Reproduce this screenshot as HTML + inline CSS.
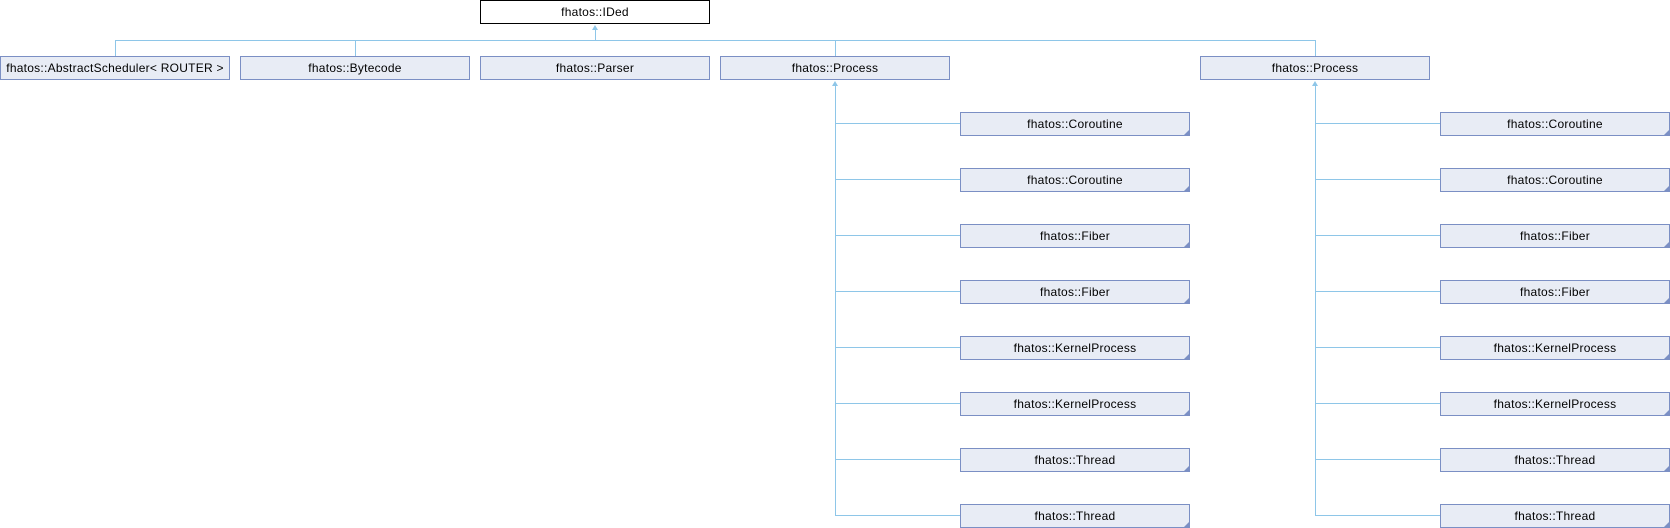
<!DOCTYPE html><html><head><style>
body{margin:0;width:1670px;height:528px;background:#fff;position:relative;overflow:hidden;font-family:"Liberation Sans",sans-serif;font-size:12px}
.b{position:absolute;box-sizing:border-box;height:24px;border:1px solid #7b8fc4;background:#e8ecf5;text-align:center;line-height:22px;color:#000;white-space:nowrap;letter-spacing:0.25px}
.t{border-color:#000;background:#fff}
.c::after{content:"";position:absolute;right:0;bottom:0;border-style:solid;border-width:0 0 5px 5px;border-color:transparent transparent #7b8fc4 transparent}
.h{position:absolute;height:1px;background:#8ec6e8}.v{position:absolute;width:1px;background:#8ec6e8}
.a{position:absolute;width:0;height:0;border-left:3px solid transparent;border-right:3px solid transparent;border-bottom:5px solid #8ec6e8}
</style></head><body>
<div class="b t" style="left:480px;top:0;width:230px">fhatos::IDed</div>
<div class="a" style="left:592px;top:25px"></div>
<div class="v" style="left:595px;top:28px;height:12px"></div>
<div class="h" style="left:115px;top:40px;width:1201px"></div>
<div class="v" style="left:115px;top:40px;height:16px"></div>
<div class="v" style="left:355px;top:40px;height:16px"></div>
<div class="v" style="left:835px;top:40px;height:16px"></div>
<div class="v" style="left:1315px;top:40px;height:16px"></div>
<div class="b" style="left:0;top:56px;width:230px">fhatos::AbstractScheduler&lt; ROUTER &gt;</div>
<div class="b" style="left:240px;top:56px;width:230px">fhatos::Bytecode</div>
<div class="b" style="left:480px;top:56px;width:230px">fhatos::Parser</div>
<div class="b" style="left:720px;top:56px;width:230px">fhatos::Process</div>
<div class="b" style="left:1200px;top:56px;width:230px">fhatos::Process</div>
<div id="kids"></div>
<script>
var names=["Coroutine","Coroutine","Fiber","Fiber","KernelProcess","KernelProcess","Thread","Thread"];
var h="";
[[835,960],[1315,1440]].forEach(function(p){
h+='<div class="a" style="left:'+(p[0]-3)+'px;top:81px"></div>';
h+='<div class="v" style="left:'+p[0]+'px;top:84px;height:'+(515-84)+'px"></div>';
names.forEach(function(n,i){var y=112+56*i;
h+='<div class="h" style="left:'+p[0]+'px;top:'+(y+11)+'px;width:'+(p[1]-p[0])+'px"></div>';
h+='<div class="b c" style="left:'+p[1]+'px;top:'+y+'px;width:230px">fhatos::'+n+'</div>';});
});
document.getElementById("kids").innerHTML=h;
</script>
</body></html>
